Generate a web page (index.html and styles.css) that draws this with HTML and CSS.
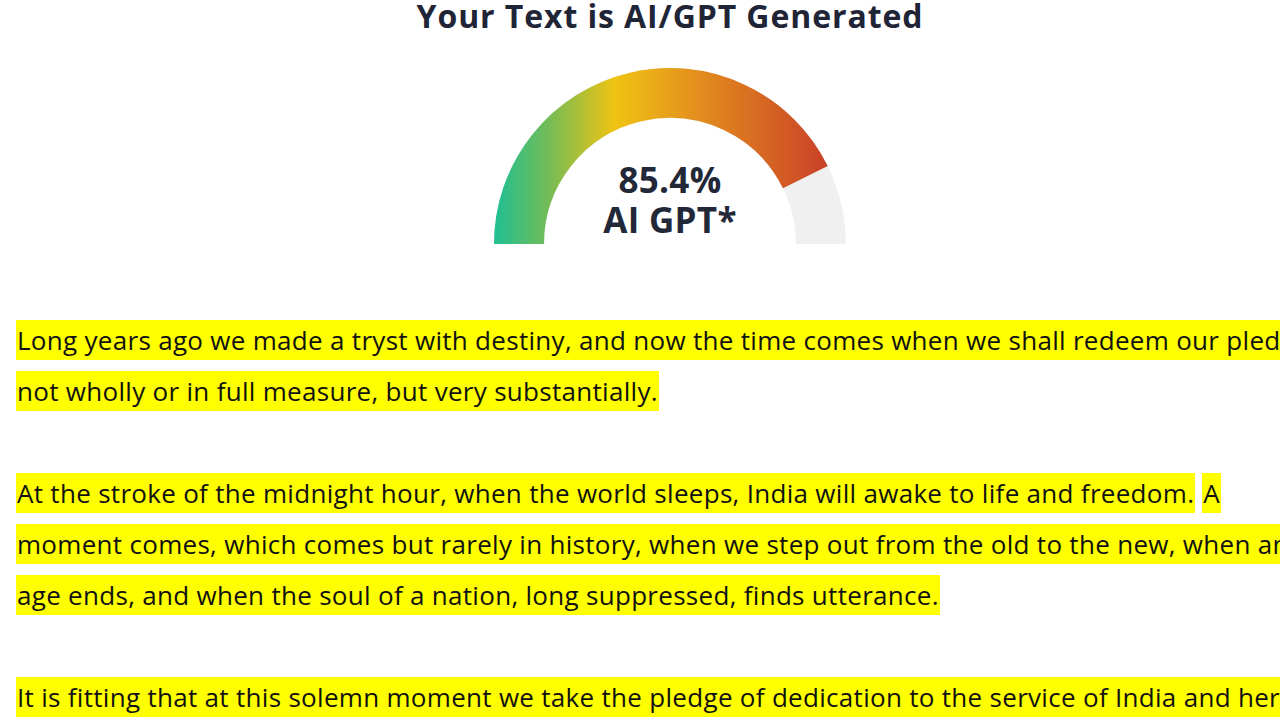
FILE: index.html
```html
<!DOCTYPE html>
<html lang="en">
<head>
<meta charset="utf-8">
<title>AI/GPT Detector Result</title>
<link rel="stylesheet" href="styles.css">
</head>
<body>
<main class="page">
  <h1 class="title">Your Text is AI/GPT Generated</h1>
  <div class="gauge">
    <svg class="gauge-svg" width="360" height="182" viewBox="0 0 360 182" aria-hidden="true">
      <defs>
        <linearGradient id="gaugeGrad" gradientUnits="userSpaceOnUse" x1="4" y1="0" x2="340" y2="0">
          <stop offset="0" stop-color="#1fbf93"/>
          <stop offset="0.16" stop-color="#72bc57"/>
          <stop offset="0.36" stop-color="#f0c313"/>
          <stop offset="0.62" stop-color="#e28b1e"/>
          <stop offset="1" stop-color="#c93f28"/>
        </linearGradient>
      </defs>
      <path d="M29 180 A151 151 0 0 1 331 180" fill="none" stroke="#f0f0f0" stroke-width="50"/>
      <path d="M29 180 A151 151 0 0 1 315.35 113.1" fill="none" stroke="url(#gaugeGrad)" stroke-width="50"/>
    </svg>
    <div class="gauge-label">
      <div class="gauge-value">85.4%</div>
      <div class="gauge-caption">AI GPT*</div>
    </div>
  </div>
  <div class="result">
    <p class="para"><mark class="hl">Long years ago we made a tryst with destiny, and now the time comes when we shall redeem our pledge,<br>not wholly or in full measure, but very substantially.</mark></p>
    <p class="para"><mark class="hl">At the stroke of the midnight hour, when the world sleeps, India will awake to life and freedom.</mark> <mark class="hl">A<br>moment comes, which comes but rarely in history, when we step out from the old to the new, when an<br>age ends, and when the soul of a nation, long suppressed, finds utterance.</mark></p>
    <p class="para"><mark class="hl">It is fitting that at this solemn moment we take the pledge of dedication to the service of India and her<br>people and to the still larger cause of humanity.</mark></p>
  </div>
</main>
</body>
</html>
```
FILE: styles.css
```css
html, body {
  margin: 0;
  padding: 0;
  background: #ffffff;
  overflow: hidden;
}

.page {
  width: 1340px;
  font-family: "Open Sans", "Noto Sans", "DejaVu Sans", sans-serif;
  color: #111111;
}

.title {
  margin: 0;
  text-align: center;
  font-size: 32px;
  line-height: 31px;
  font-weight: 700;
  color: #1f2536;
  letter-spacing: 0.9px;
}

.gauge {
  position: relative;
  width: 360px;
  height: 182px;
  margin: 33px auto 0;
}

.gauge-svg {
  display: block;
}

.gauge-label {
  position: absolute;
  left: 0;
  right: 0;
  top: 96px;
  text-align: center;
  font-size: 35px;
  line-height: 40px;
  font-weight: 700;
  color: #222838;
  letter-spacing: 0.3px;
}

.result {
  padding: 69px 16px 0;
}

.para {
  margin: 0 0 51px;
  font-size: 26px;
  line-height: 51px;
  white-space: nowrap;
  letter-spacing: 0.3px;
}

.hl {
  background: #ffff00;
  color: #111111;
  padding: 2px 1px;
  -webkit-box-decoration-break: clone;
  box-decoration-break: clone;
}
```
